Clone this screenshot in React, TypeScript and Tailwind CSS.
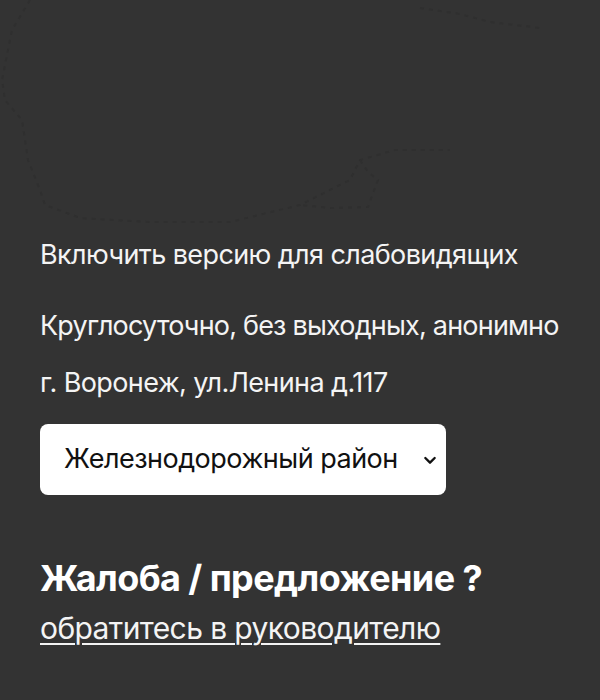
import React from 'react';

// Фоновый контур (едва заметная карта района)
const MapOutline = () => (
  <svg className="block h-[232px] w-full" viewBox="0 0 600 232" fill="none">
    <g stroke="#2f2f2f" strokeWidth="2" strokeDasharray="4 5">
      <path d="M30 0 L12 30 L2 80 L5 100 L22 120 L28 160 L40 190 L45 205 L80 218 L150 222 L230 222 L300 205 L350 180 L360 160 L395 150 L450 150" />
      <path d="M360 160 L368 172 L378 180 L372 196 L368 207 L330 208 L300 205" />
      <path d="M420 8 L460 14 L490 22 L540 28" />
    </g>
  </svg>
);

export default function App() {
  return (
    <div className="min-h-[700px] w-full bg-[#333333] font-['Inter','Roboto',sans-serif] text-white">
      <MapOutline />
      <div className="flex flex-col whitespace-nowrap px-10">
        <a className="text-[27px] leading-[46px] tracking-[-0.6px] text-[#f4f4f4]">
          Включить версию для слабовидящих
        </a>
        <p className="mt-[25px] text-[27px] leading-[46px] tracking-[-0.8px] text-[#f4f4f4]">
          Круглосуточно, без выходных, анонимно
        </p>
        <p className="mt-[11px] text-[27px] leading-[46px] tracking-[-0.6px] text-[#f4f4f4]">
          г. Воронеж, ул.Ленина д.117
        </p>
        <div className="mt-[18px] flex h-[71px] w-[406px] items-center justify-between rounded-lg bg-white pl-6 pr-2 text-[27px] tracking-[-0.5px] text-[#111]">
          <span>Железнодорожный район</span>
          <svg width="16" height="16" viewBox="0 0 24 24" fill="none" stroke="#111" strokeWidth="3.5" strokeLinecap="round" strokeLinejoin="round">
            <path d="M5 9l7 7 7-7" />
          </svg>
        </div>
        <h2 className="mt-[61px] text-[36px] font-bold leading-[44px] tracking-[-0.6px]">
          Жалоба / предложение ?
        </h2>
        <a className="mt-[8px] text-[30px] leading-[40px] tracking-[-0.6px] text-[#f4f4f4] underline underline-offset-[4px] decoration-[1.5px]">
          обратитесь в руководителю
        </a>
      </div>
    </div>
  );
}
